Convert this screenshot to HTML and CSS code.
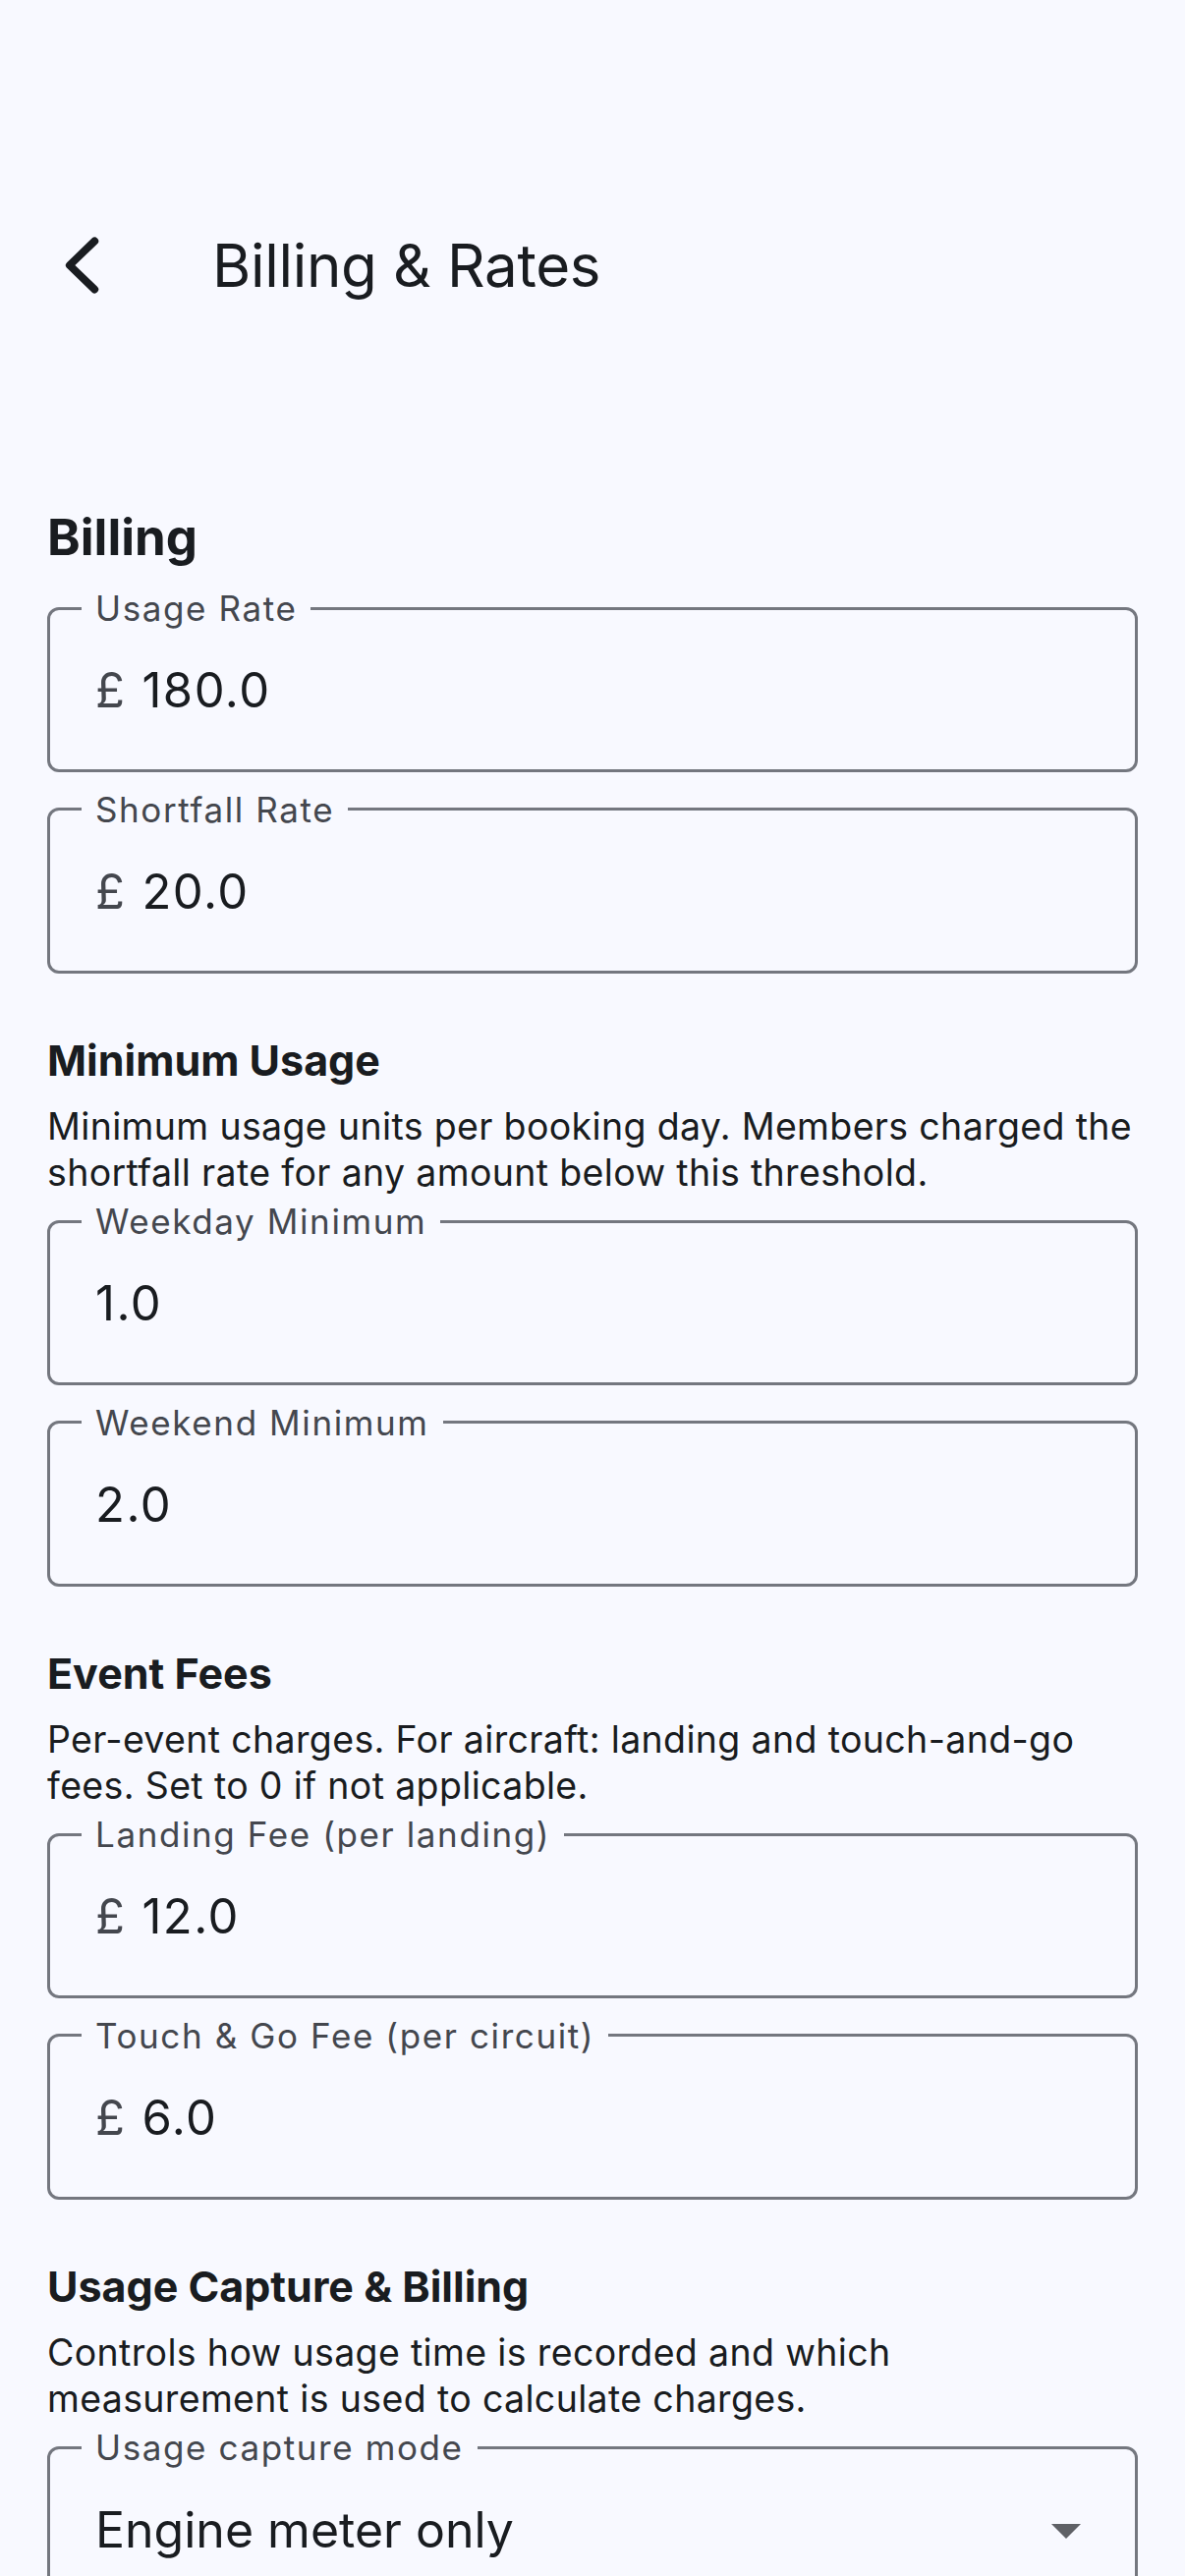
FILE: index.html
```html
<!DOCTYPE html>
<html lang="en">
<head>
<meta charset="utf-8">
<title>Billing &amp; Rates</title>
<link rel="stylesheet" href="styles.css">
</head>
<body>
<header class="appbar">
  <button class="back" aria-label="Back">
    <svg viewBox="0 0 24 24" width="72" height="72" aria-hidden="true"><path d="M16.1 3.8L7.6 12l8.5 8.2" fill="none" stroke="#191c20" stroke-width="2.6" stroke-linecap="round" stroke-linejoin="round"/></svg>
  </button>
  <h1 class="title">Billing &amp; Rates</h1>
</header>
<main class="content">
  <h2 class="section-title">Billing</h2>
  <fieldset class="field">
    <legend class="field-label">Usage Rate</legend>
    <div class="field-value"><span class="prefix">£</span>180.0</div>
  </fieldset>
  <fieldset class="field">
    <legend class="field-label">Shortfall Rate</legend>
    <div class="field-value"><span class="prefix">£</span>20.0</div>
  </fieldset>

  <h3 class="group-title">Minimum Usage</h3>
  <p class="desc">Minimum usage units per booking day. Members charged the shortfall rate for any amount below this threshold.</p>
  <fieldset class="field">
    <legend class="field-label">Weekday Minimum</legend>
    <div class="field-value">1.0</div>
  </fieldset>
  <fieldset class="field">
    <legend class="field-label">Weekend Minimum</legend>
    <div class="field-value">2.0</div>
  </fieldset>

  <h3 class="group-title">Event Fees</h3>
  <p class="desc">Per-event charges. For aircraft: landing and touch-and-go fees. Set to 0 if not applicable.</p>
  <fieldset class="field">
    <legend class="field-label">Landing Fee (per landing)</legend>
    <div class="field-value"><span class="prefix">£</span>12.0</div>
  </fieldset>
  <fieldset class="field">
    <legend class="field-label">Touch &amp; Go Fee (per circuit)</legend>
    <div class="field-value"><span class="prefix">£</span>6.0</div>
  </fieldset>

  <h3 class="group-title">Usage Capture &amp; Billing</h3>
  <p class="desc">Controls how usage time is recorded and which measurement is used to calculate charges.</p>
  <fieldset class="field field-select">
    <legend class="field-label">Usage capture mode</legend>
    <div class="select-row">
      <span class="select-value">Engine meter only</span>
      <svg class="caret" viewBox="0 0 24 24" width="72" height="72" aria-hidden="true"><path d="M7 10l5 5 5-5z" fill="#5f6166"/></svg>
    </div>
  </fieldset>
</main>
</body>
</html>
```

FILE: styles.css
```css
* { box-sizing: border-box; }
html, body {
  margin: 0;
  padding: 0;
  background: #f8f9ff;
  color: #191c20;
  font-family: Inter, "Noto Sans", "DejaVu Sans", sans-serif;
}
.appbar {
  display: flex;
  align-items: center;
  height: 354px;
  padding-top: 186px;
}
.back {
  width: 168px;
  height: 168px;
  flex: 0 0 168px;
  display: flex;
  align-items: center;
  justify-content: center;
  background: none;
  border: 0;
  padding: 0;
  margin: 0;
}
.title {
  margin: 0 0 0 48px;
  font-size: 60px;
  font-weight: 400;
  line-height: 80px;
  letter-spacing: -0.3px;
}
.content {
  padding: 165px 48px 0;
}
.section-title {
  margin: 0 0 26px;
  font-size: 51px;
  line-height: 56px;
  font-weight: 700;
}
.group-title {
  margin: 62.5px 0 0;
  font-size: 43px;
  line-height: 52px;
  font-weight: 700;
}
.desc {
  margin: 18px 0 8px;
  font-size: 37.5px;
  line-height: 47px;
  letter-spacing: 0.35px;
}
.field {
  margin: 0 0 19.5px;
  padding: 42px 46px 56px;
  border: 3px solid #74777f;
  border-radius: 12px;
  min-width: 0;
}
.field-label {
  margin-left: -14px;
  padding: 0 14px;
  font-size: 35px;
  line-height: 36px;
  letter-spacing: 1.6px;
  color: #44474e;
}
.field-value {
  font-size: 49px;
  line-height: 48px;
  letter-spacing: 1.5px;
  color: #191c20;
}
.prefix {
  color: #44474e;
  margin-right: 16px;
}
.select-row {
  display: flex;
  align-items: center;
  justify-content: space-between;
  height: 48px;
}
.select-value {
  font-size: 50px;
  line-height: 48px;
}
.caret {
  margin-right: -12px;
}
```
